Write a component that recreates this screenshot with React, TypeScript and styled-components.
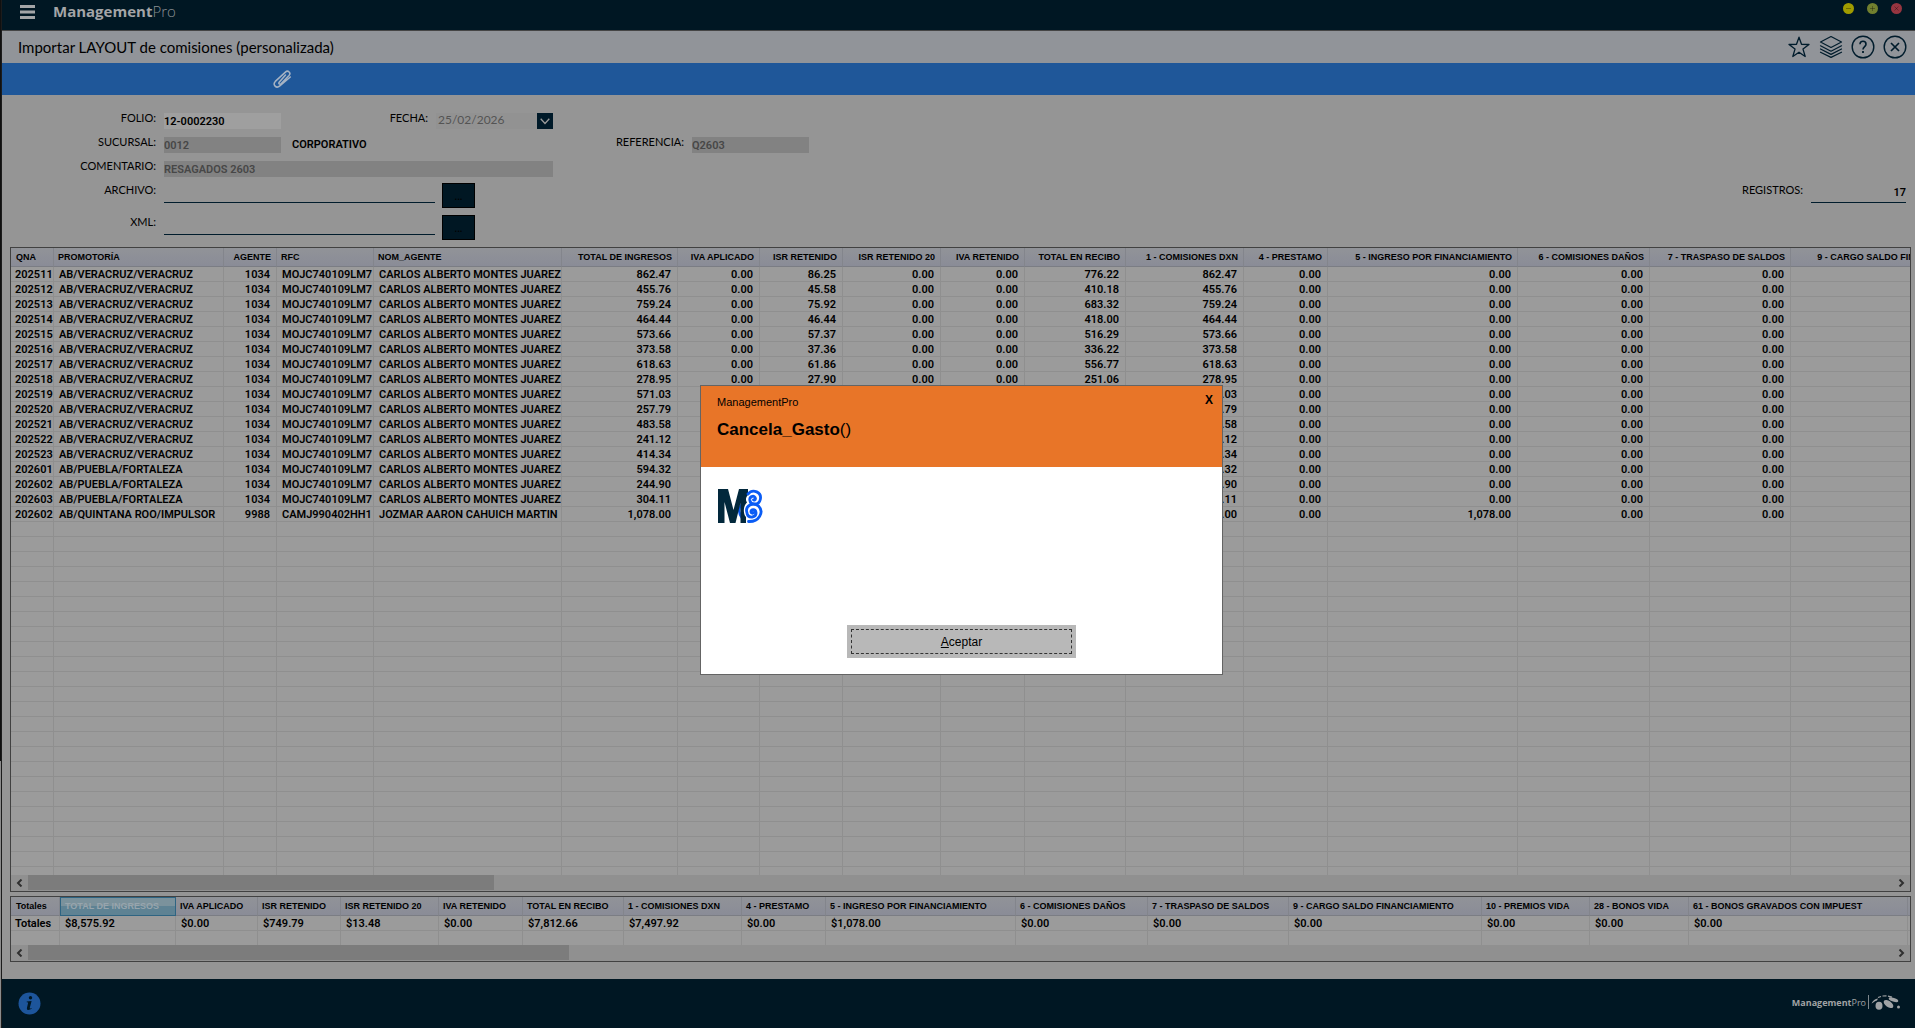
import React from "react";
import styled, { createGlobalStyle, css } from "styled-components";

const colors = {
  navy: "#001723",
  ink: "#000000",
  form: "#959595",
  grid: "#9b9b9b",
  line: "#8f8f8f",
  frame: "#414141",
  blue: "#1f5799",
};
const uiFont = `Lato, "Open Sans", sans-serif`;
const dataFont = `Roboto, "Open Sans", sans-serif`;
const arial = `"Liberation Sans", Arial, sans-serif`;

const GlobalStyle = createGlobalStyle`
  *, *::before, *::after { box-sizing: border-box; }
  body { margin: 0; background: ${colors.form}; font-family: ${uiFont}; color: ${colors.ink}; }
  button, input { font: inherit; color: inherit; margin: 0; padding: 0; border: 0; border-radius: 0; }
`;

const Page = styled.div`
  display: flex;
  flex-direction: column;
  height: 100vh;
  min-height: 640px;
  overflow: hidden;
  padding-left: 2px;
  background:
    linear-gradient(#101010 74%, #8c8c8c 74%) left / 1px 100% no-repeat,
    linear-gradient(#1c1c1c, #1c1c1c) left / 2px 100% no-repeat,
    ${colors.form};
`;

const TopBar = styled.header`
  display: flex;
  align-items: flex-start;
  height: 31px;
  flex: none;
  padding: 0 13px 0 18px;
  background: ${colors.navy};
  border-bottom: 1px solid #454545;
`;
const PlainButton = styled.button`
  display: flex;
  align-items: center;
  justify-content: center;
  background: none;
  flex: none;
`;
const MenuButton = styled(PlainButton)`
  width: 15px;
  height: 24px;
`;
const Brand = styled.div`
  margin-left: 18px;
  font: 700 15px/22px "Open Sans", sans-serif;
  color: #a3a5a7;
  span { font-weight: 300; color: #8a8f93; }
`;
const WindowButtons = styled.div`
  display: flex;
  gap: 13px;
  margin-left: auto;
  padding-top: 3px;
`;
const Dot = styled.button<{ $color: string }>`
  display: flex;
  align-items: center;
  justify-content: center;
  width: 11px;
  height: 11px;
  border-radius: 50%;
  background: ${(p) => p.$color};
  color: rgba(0, 0, 0, 0.3);
`;

const TitleBar = styled.div`
  display: flex;
  align-items: center;
  height: 32px;
  flex: none;
  padding: 0 8px 0 16px;
  background: #919499;
`;
const Title = styled.h1`
  margin: 0;
  font: 400 15px/20px ${uiFont};
`;
const TitleActions = styled.div`
  display: flex;
  gap: 8px;
  margin-left: auto;
  color: #001c2c;
`;
const ActionButton = styled(PlainButton)`
  width: 24px;
  height: 24px;
`;
const Ribbon = styled.div`
  display: flex;
  align-items: center;
  height: 32px;
  flex: none;
  padding-left: 270px;
  background: ${colors.blue};
  color: #a6b3c4;
`;

const Form = styled.form`
  display: flex;
  flex: none;
  align-items: flex-start;
  padding: 18px 9px 7px 0;
  font-size: 11px;
`;
const FieldColumn = styled.div<{ $width?: number; $top?: number; $right?: boolean }>`
  display: flex;
  flex-direction: column;
  gap: 6px;
  width: ${(p) => (p.$width ? p.$width + "px" : "auto")};
  padding-top: ${(p) => p.$top ?? 0}px;
  margin-left: ${(p) => (p.$right ? "auto" : "0")};
`;
const Rows = styled.div<{ $gap: number }>`
  display: flex;
  flex-direction: column;
  gap: ${(p) => p.$gap}px;
`;
const FieldRow = styled.div`
  display: flex;
  align-items: flex-start;
`;
const Label = styled.label<{ $width: number; $tall?: boolean }>`
  width: ${(p) => p.$width}px;
  padding-right: 8px;
  flex: none;
  text-align: right;
  white-space: nowrap;
  line-height: ${(p) => (p.$tall ? 14 : 10)}px;
`;
const Field = styled.input<{ $width: number; $tone?: "white" | "grey" | "faint" }>`
  width: ${(p) => p.$width}px;
  height: 16px;
  flex: none;
  outline: none;
  font-weight: 600;
  font-family: ${dataFont};
  line-height: 14px;
  background: #9f9f9f;
  ${(p) => p.$tone === "grey" && css`background: #828282; color: #474747;`}
  ${(p) => p.$tone === "faint" && css`
    background: #929292;
    color: #545454;
    font-family: ${uiFont};
    font-size: 12px;
    font-weight: 400;
    padding: 0 0 3px 2px;
  `}
`;
const LineField = styled.input<{ $width: number }>`
  width: ${(p) => p.$width}px;
  height: 20px;
  flex: none;
  background: none;
  border-bottom: 1px solid #001c2c;
  outline: none;
  font-weight: 600;
  font-family: ${dataFont};
  text-align: right;
`;
const BranchName = styled.output`
  margin-left: 11px;
  font-weight: 600;
  font-family: ${dataFont};
  line-height: 16px;
`;
const DropButton = styled(PlainButton)`
  width: 16px;
  height: 16px;
  background: #001a29;
  color: #9b9b9b;
`;
const BrowseButton = styled.button`
  width: 33px;
  height: 25px;
  margin-left: 7px;
  background: ${colors.navy};
  border: 1px solid #000;
  color: #000;
  line-height: 20px;
`;

const GridFrame = styled.section<{ $fill?: boolean }>`
  display: flex;
  flex-direction: column;
  ${(p) => p.$fill ? css`flex: 1 1 0; min-height: 0;` : css`flex: none;`}
  margin: 0 4px 4px 8px;
  border: 1px solid ${colors.frame};
  background: ${colors.grid};
`;
const GridView = styled.div<{ $height?: number }>`
  overflow: hidden;
  ${(p) => p.$height ? css`height: ${p.$height}px;` : css`flex: 1 1 0; min-height: 0;`}
`;
const Table = styled.table<{ $width: number }>`
  table-layout: fixed;
  width: ${(p) => p.$width}px;
  border-collapse: separate;
  border-spacing: 0;
`;
const Th = styled.th<{ $right?: boolean; $active?: boolean }>`
  height: 19px;
  padding: 0 5px 0 4px;
  overflow: hidden;
  white-space: nowrap;
  font: 700 9px/18px ${arial};
  text-align: ${(p) => (p.$right ? "right" : "left")};
  background: linear-gradient(#919398, #8a8c97);
  border-right: 1px solid #83858c;
  border-bottom: 1px solid #7b7d84;
  &:first-child { padding-left: 5px; }
  ${(p) => p.$active && css`
    color: #98a5ad;
    background: linear-gradient(#7b929c 50%, #5e8293 50%);
    border: 1px solid #2e6482;
    line-height: 17px;
  `}
`;
const Td = styled.td<{ $right?: boolean }>`
  height: 15px;
  padding: 2px ${(p) => (p.$right ? 6 : 0)}px 0 5px;
  overflow: hidden;
  white-space: nowrap;
  font: 600 11px/12px ${dataFont};
  text-align: ${(p) => (p.$right ? "right" : "left")};
  border-right: 1px solid ${colors.line};
  border-bottom: 1px solid ${colors.line};
`;
const FirstTd = styled(Td)`
  padding: 2px 0 0 4px;
`;
const ScrollBar = styled.div`
  display: flex;
  align-items: center;
  height: 16px;
  flex: none;
  background: #909090;
`;
const ScrollArrow = styled(PlainButton)`
  width: 17px;
  height: 16px;
  color: #2f2f2f;
`;
const ScrollTrack = styled.div`
  flex: 1;
  height: 16px;
`;
const ScrollThumb = styled.div<{ $size: number }>`
  width: ${(p) => p.$size}%;
  height: 15px;
  background: #7c7c7c;
`;

const Footer = styled.footer`
  display: flex;
  align-items: center;
  justify-content: space-between;
  height: 49px;
  flex: none;
  margin-top: 13px;
  padding: 0 14px 0 16px;
  background: ${colors.navy};
`;
const FooterBrand = styled.div`
  display: flex;
  align-items: center;
  gap: 2px;
  padding-bottom: 2px;
  font: 700 9px/14px "Open Sans", sans-serif;
  color: #a0a3a5;
  span { font-weight: 400; }
`;

const Overlay = styled.div`
  position: fixed;
  inset: 0;
  display: flex;
  align-items: center;
  justify-content: center;
  padding: 32px 0 0 8px;
`;
const Dialog = styled.div`
  display: flex;
  flex-direction: column;
  width: 523px;
  height: 290px;
  background: #fff;
  border: 1px solid #646464;
  font-family: ${arial};
`;
const DialogHead = styled.div`
  display: flex;
  justify-content: space-between;
  align-items: flex-start;
  height: 81px;
  padding: 8px 7px 0 16px;
  background: #e87528;
`;
const DialogApp = styled.div`
  font-size: 11px;
  line-height: 16px;
`;
const DialogTitle = styled.h2`
  margin: 8px 0 0;
  font-size: 17px;
  line-height: 24px;
  font-weight: 700;
  span { font-weight: 400; }
`;
const CloseButton = styled(PlainButton)`
  width: 12px;
  height: 12px;
  font-size: 12px;
  font-weight: 700;
  line-height: 12px;
`;
const DialogBody = styled.div`
  flex: 1;
  padding: 21px 16px 0;
`;
const DialogFoot = styled.div`
  display: flex;
  justify-content: center;
  padding-bottom: 16px;
`;
const AcceptButton = styled.button`
  width: 229px;
  height: 33px;
  padding: 4px;
  background: #b8b8b8;
  font-size: 12px;
  span {
    display: block;
    height: 25px;
    border: 1px dashed #333;
    line-height: 24px;
  }
`;

const LayersIcon = () => (
  <svg width="24" height="24" viewBox="0 0 24 24" fill="none" stroke="currentColor" strokeWidth="1.2" strokeLinejoin="round" strokeLinecap="round">
    <path d="M12 1.5 22.5 7 12 12.5 1.5 7Z" />
    <path d="M1.5 10.8 12 16.2 22.5 10.8" />
    <path d="M1.5 14 12 19.4 22.5 14" />
    <path d="M1.5 17.2 12 22.4 22.5 17.2" />
  </svg>
);
const StarIcon = () => (
  <svg width="24" height="24" viewBox="0 0 24 24" fill="none" stroke="currentColor" strokeWidth="1.3" strokeLinejoin="round">
    <path d="M12 2.2 14.5 9.3 22 9.5 16 14.1 18.2 21.5 12 17.2 5.8 21.5 8 14.1 2 9.5 9.5 9.3Z" />
  </svg>
);
const HelpIcon = () => (
  <svg width="24" height="24" viewBox="0 0 24 24" fill="none" stroke="currentColor" strokeWidth="1.4">
    <circle cx="12" cy="12" r="10.8" />
    <path d="M9 9.2c0-4 6-3.800 6 0 0 2.300-3 2.500-3 5.300" strokeWidth="1.600" />
    <path d="M12 16v2" strokeWidth="1.800" />
  </svg>
);
const ExitIcon = () => (
  <svg width="24" height="24" viewBox="0 0 24 24" fill="none" stroke="currentColor" strokeWidth="1.4">
    <circle cx="12" cy="12" r="10.8" />
    <path d="M8 8 16 16M16 8 8 16" strokeWidth="1.700" />
  </svg>
);
const ClipIcon = () => (
  <svg width="20" height="20" viewBox="0 0 20 20" fill="none" stroke="currentColor" strokeWidth="1.5" strokeLinecap="round">
    <path d="M13.500 6 7.200 13.200c-1 1.400 .6 2.700 1.800 1.500L17 6.500c2.400-2.600-1-5.800-3.600-3.400L3.300 12.400c-3 3.400 1 7.700 4.500 4.500L18.300 8" />
  </svg>
);
const Chevron = ({ dir }: { dir: "left" | "right" }) => (
  <svg width="7" height="8" viewBox="0 0 7 8" fill="none" stroke="currentColor" strokeWidth="2">
    <path d={dir === "left" ? "M5.500 .5 2 4 5.500 7.500" : "M1.500 .5 5 4 1.500 7.500"} />
  </svg>
);
const InfoIcon = () => (
  <svg width="23" height="23" viewBox="0 0 23 23">
    <circle cx="11.500" cy="11.500" r="11" fill="#1d559b" />
    <circle cx="12.500" cy="5.700" r="1.700" fill={colors.navy} />
    <path d="M8.800 9.500 13.600 9 11.800 15.800c-.2 1 .5 1 1.700 .2l.3 .6c-2.300 2-5.500 2.200-4.800-.9l1.100-4.600c.1-.7-.3-.9-1.500-.9Z" fill={colors.navy} />
  </svg>
);
const PawLogo = () => (
  <svg width="33" height="16" viewBox="0 0 33 16" fill="#a0a3a5">
    <path d="M.5 0V14" stroke="#7d868b" strokeWidth="1" />
    <path d="M3.500 8.500C5 5.500 7 4 10 3.500L9 5.500C7 6 5.500 7.500 3.500 8.500Z" />
    <path d="M10 2.500 13 1.500M14.500 1 18.500 .9M20 1.100 24 2.200" stroke="#a0a3a5" strokeWidth="1.200" />
    <ellipse cx="11" cy="10.800" rx="3.500" ry="4" />
    <ellipse cx="20.500" cy="9" rx="5.500" ry="3" transform="rotate(35 20.500 9)" />
    <ellipse cx="25.500" cy="4.800" rx="5" ry="1.800" transform="rotate(18 25.500 4.800)" />
    <circle cx="30.500" cy="12" r="1.500" />
  </svg>
);
const DialogLogo = () => (
  <svg width="46" height="36" viewBox="0 0 46 36" fill="none">
    <path d="M25 16C21.500 20 21.500 25 25 30" stroke="#0a5cf5" strokeWidth="2.500" />
    <path d="M1 1H11L16.500 22 22 1H31V7C28 10 29 13 30 14.500 26 18 26 26 29 29V35H23.500V15L18.500 35H13L7.500 14V35H1Z" fill="#02283c" />
    <path d="M31 6C36 0 45 4.500 43.300 11.500 42 17.500 33.500 17.500 32.800 12 32.400 8 38 6.800 38.500 10.500 38.500 12 37 12.500 36.500 11.800" stroke="#0a5cf5" strokeWidth="2.800" strokeLinecap="round" />
    <path d="M30 25C27.500 17.500 36.500 13.500 41.500 18 47.500 24 42 34 31.500 33.500M30.200 26C31.500 30.500 39.500 30 39 24.500 38.500 20.500 33.500 21.300 34 24 34.500 25.500 36 25.500 36.300 24.800" stroke="#0a5cf5" strokeWidth="2.800" strokeLinecap="round" />
  </svg>
);

type Column = { title: string; width: number; right?: boolean };
const columns: Column[] = [
  { title: "QNA", width: 43 },
  { title: "PROMOTORÍA", width: 170 },
  { title: "AGENTE", width: 53, right: true },
  { title: "RFC", width: 97 },
  { title: "NOM_AGENTE", width: 188 },
  { title: "TOTAL DE INGRESOS", width: 116, right: true },
  { title: "IVA APLICADO", width: 82, right: true },
  { title: "ISR RETENIDO", width: 83, right: true },
  { title: "ISR RETENIDO 20", width: 98, right: true },
  { title: "IVA RETENIDO", width: 84, right: true },
  { title: "TOTAL EN RECIBO", width: 101, right: true },
  { title: "1 - COMISIONES DXN", width: 118, right: true },
  { title: "4 - PRESTAMO", width: 84, right: true },
  { title: "5 - INGRESO POR FINANCIAMIENTO", width: 190, right: true },
  { title: "6 - COMISIONES DAÑOS", width: 132, right: true },
  { title: "7 - TRASPASO DE SALDOS", width: 141, right: true },
  { title: "9 - CARGO SALDO FINANCIAMIENTO", width: 193, right: true },
];
const columnsWidth = columns.reduce((sum, c) => sum + c.width, 0);

const VER = "AB/VERACRUZ/VERACRUZ";
const PUE = "AB/PUEBLA/FORTALEZA";
const payments: [string, string, string, string, string][] = [
  ["202511", VER, "862.47", "86.25", "776.22"],
  ["202512", VER, "455.76", "45.58", "410.18"],
  ["202513", VER, "759.24", "75.92", "683.32"],
  ["202514", VER, "464.44", "46.44", "418.00"],
  ["202515", VER, "573.66", "57.37", "516.29"],
  ["202516", VER, "373.58", "37.36", "336.22"],
  ["202517", VER, "618.63", "61.86", "556.77"],
  ["202518", VER, "278.95", "27.90", "251.06"],
  ["202519", VER, "571.03", "57.10", "513.93"],
  ["202520", VER, "257.79", "25.78", "232.01"],
  ["202521", VER, "483.58", "48.36", "435.22"],
  ["202522", VER, "241.12", "24.11", "217.01"],
  ["202523", VER, "414.34", "41.43", "372.91"],
  ["202601", PUE, "594.32", "59.43", "534.89"],
  ["202602", PUE, "244.90", "24.49", "220.41"],
  ["202603", PUE, "304.11", "30.41", "273.70"],
];
const Z = "0.00";
const rows: string[][] = payments.map(([qna, office, total, isr, net]) => [
  qna, office, "1034", "MOJC740109LM7", "CARLOS ALBERTO MONTES JUAREZ",
  total, Z, isr, Z, Z, net, total, Z, Z, Z, Z, "",
]);
rows.push([
  "202602", "AB/QUINTANA ROO/IMPULSOR", "9988", "CAMJ990402HH1", "JOZMAR AARON CAHUICH MARTIN",
  "1,078.00", Z, Z, "13.48", Z, "1,064.52", Z, Z, "1,078.00", Z, Z, "",
]);
const EMPTY_ROWS = 60;

const totals: [string, string, number][] = [
  ["Totales", "Totales", 49],
  ["TOTAL DE INGRESOS", "$8,575.92", 116],
  ["IVA APLICADO", "$0.00", 82],
  ["ISR RETENIDO", "$749.79", 83],
  ["ISR RETENIDO 20", "$13.48", 98],
  ["IVA RETENIDO", "$0.00", 84],
  ["TOTAL EN RECIBO", "$7,812.66", 101],
  ["1 - COMISIONES DXN", "$7,497.92", 118],
  ["4 - PRESTAMO", "$0.00", 84],
  ["5 - INGRESO POR FINANCIAMIENTO", "$1,078.00", 190],
  ["6 - COMISIONES DAÑOS", "$0.00", 132],
  ["7 - TRASPASO DE SALDOS", "$0.00", 141],
  ["9 - CARGO SALDO FINANCIAMIENTO", "$0.00", 193],
  ["10 - PREMIOS VIDA", "$0.00", 108],
  ["28 - BONOS VIDA", "$0.00", 99],
  ["61 - BONOS GRAVADOS CON IMPUEST", "$0.00", 219],
  ["", "", 60],
];
const totalsWidth = totals.reduce((sum, [, , width]) => sum + width, 0);

const HScroll = ({ size }: { size: number }) => (
  <ScrollBar>
    <ScrollArrow type="button" aria-label="Desplazar a la izquierda"><Chevron dir="left" /></ScrollArrow>
    <ScrollTrack><ScrollThumb $size={size} /></ScrollTrack>
    <ScrollArrow type="button" aria-label="Desplazar a la derecha"><Chevron dir="right" /></ScrollArrow>
  </ScrollBar>
);

const MainGrid = () => (
  <GridFrame $fill>
    <GridView>
      <Table $width={columnsWidth}>
        <colgroup>{columns.map((c) => <col key={c.title} width={c.width} />)}</colgroup>
        <thead>
          <tr>{columns.map((c) => <Th key={c.title} $right={c.right}>{c.title}</Th>)}</tr>
        </thead>
        <tbody>
          {rows.map((row, i) => (
            <tr key={i}>
              {row.map((value, j) => j === 0
                ? <FirstTd key={j}>{value}</FirstTd>
                : <Td key={j} $right={columns[j].right}>{value}</Td>)}
            </tr>
          ))}
          {Array.from({ length: EMPTY_ROWS }, (_, i) => (
            <tr key={"e" + i}>{columns.map((c) => <Td key={c.title} />)}</tr>
          ))}
        </tbody>
      </Table>
    </GridView>
    <HScroll size={25} />
  </GridFrame>
);

const TotalsGrid = () => (
  <GridFrame>
    <GridView $height={48}>
      <Table $width={totalsWidth}>
        <colgroup>{totals.map(([title, , width]) => <col key={title} width={width} />)}</colgroup>
        <thead>
          <tr>{totals.map(([title], i) => <Th key={title} $active={i === 1}>{title}</Th>)}</tr>
        </thead>
        <tbody>
          <tr>{totals.map(([title, value], i) => i === 0
            ? <FirstTd key={title}>{value}</FirstTd>
            : <Td key={title}>{value}</Td>)}</tr>
          <tr>{totals.map(([title]) => <Td key={title} />)}</tr>
        </tbody>
      </Table>
    </GridView>
    <HScroll size={29} />
  </GridFrame>
);

export default function App() {
  return (
    <>
      <GlobalStyle />
      <Page>
        <TopBar>
          <MenuButton aria-label="Menú">
            <svg width="15" height="14" viewBox="0 0 15 14" fill="#a3a5a7">
              <path d="M0 0H15V3H0ZM0 5.500H15V8.500H0ZM0 11H15V14H0Z" />
            </svg>
          </MenuButton>
          <Brand>Management<span>Pro</span></Brand>
          <WindowButtons>
            <Dot $color="#a09c00" aria-label="Minimizar"><svg width="7" height="7" stroke="currentColor"><path d="M1 3.500H6" /></svg></Dot>
            <Dot $color="#71802f" aria-label="Maximizar"><svg width="7" height="7" stroke="currentColor"><path d="M1 3.500H6M3.500 1V6" /></svg></Dot>
            <Dot $color="#963540" aria-label="Cerrar"><svg width="7" height="7" stroke="currentColor"><path d="M1.500 1.500 5.500 5.500M5.500 1.500 1.500 5.500" /></svg></Dot>
          </WindowButtons>
        </TopBar>
        <TitleBar>
          <Title>Importar LAYOUT de comisiones (personalizada)</Title>
          <TitleActions>
            <ActionButton aria-label="Favorito"><StarIcon /></ActionButton>
            <ActionButton aria-label="Capas"><LayersIcon /></ActionButton>
            <ActionButton aria-label="Ayuda"><HelpIcon /></ActionButton>
            <ActionButton aria-label="Salir"><ExitIcon /></ActionButton>
          </TitleActions>
        </TitleBar>
        <Ribbon>
          <PlainButton aria-label="Adjuntar"><ClipIcon /></PlainButton>
        </Ribbon>

        <Form onSubmit={(e) => e.preventDefault()}>
          <FieldColumn $width={551}>
            <Rows $gap={8}>
              <FieldRow>
                <Label htmlFor="folio" $width={162}>FOLIO:</Label>
                <Field id="folio" $width={117} defaultValue="12-0002230" />
                <Label htmlFor="fecha" $width={155}>FECHA:</Label>
                <Field id="fecha" $width={101} $tone="faint" defaultValue="25/02/2026" />
                <DropButton type="button" aria-label="Elegir fecha">
                  <svg width="10" height="7" viewBox="0 0 10 7" fill="none" stroke="currentColor" strokeWidth="1.300"><path d="M.7 .8 5 5.500 9.300 .8" /></svg>
                </DropButton>
              </FieldRow>
              <FieldRow>
                <Label htmlFor="sucursal" $width={162}>SUCURSAL:</Label>
                <Field id="sucursal" $width={117} $tone="grey" defaultValue="0012" />
                <BranchName htmlFor="sucursal">CORPORATIVO</BranchName>
              </FieldRow>
              <FieldRow>
                <Label htmlFor="comentario" $width={162}>COMENTARIO:</Label>
                <Field id="comentario" $width={389} $tone="grey" defaultValue="RESAGADOS 2603" />
              </FieldRow>
            </Rows>
            <Rows $gap={7}>
              <FieldRow>
                <Label htmlFor="archivo" $width={162} $tall>ARCHIVO:</Label>
                <LineField id="archivo" $width={271} />
                <BrowseButton type="button" aria-label="Buscar archivo">...</BrowseButton>
              </FieldRow>
              <FieldRow>
                <Label htmlFor="xml" $width={162} $tall>XML:</Label>
                <LineField id="xml" $width={271} />
                <BrowseButton type="button" aria-label="Buscar XML">...</BrowseButton>
              </FieldRow>
            </Rows>
          </FieldColumn>
          <FieldColumn $top={24}>
            <FieldRow>
              <Label htmlFor="referencia" $width={139}>REFERENCIA:</Label>
              <Field id="referencia" $width={117} $tone="grey" defaultValue="Q2603" />
            </FieldRow>
          </FieldColumn>
          <FieldColumn $top={70} $right>
            <FieldRow>
              <Label htmlFor="registros" $width={80} $tall>REGISTROS:</Label>
              <LineField id="registros" $width={95} defaultValue="17" />
            </FieldRow>
          </FieldColumn>
        </Form>

        <MainGrid />
        <TotalsGrid />

        <Footer>
          <PlainButton aria-label="Información"><InfoIcon /></PlainButton>
          <FooterBrand><div>Management<span>Pro</span></div><PawLogo /></FooterBrand>
        </Footer>
      </Page>

      <Overlay>
        <Dialog role="dialog" aria-modal="true" aria-labelledby="dialog-title">
          <DialogHead>
            <div>
              <DialogApp>ManagementPro</DialogApp>
              <DialogTitle id="dialog-title">Cancela_Gasto<span>()</span></DialogTitle>
            </div>
            <CloseButton aria-label="Cerrar">X</CloseButton>
          </DialogHead>
          <DialogBody><DialogLogo /></DialogBody>
          <DialogFoot><AcceptButton><span><u>A</u>ceptar</span></AcceptButton></DialogFoot>
        </Dialog>
      </Overlay>
    </>
  );
}
